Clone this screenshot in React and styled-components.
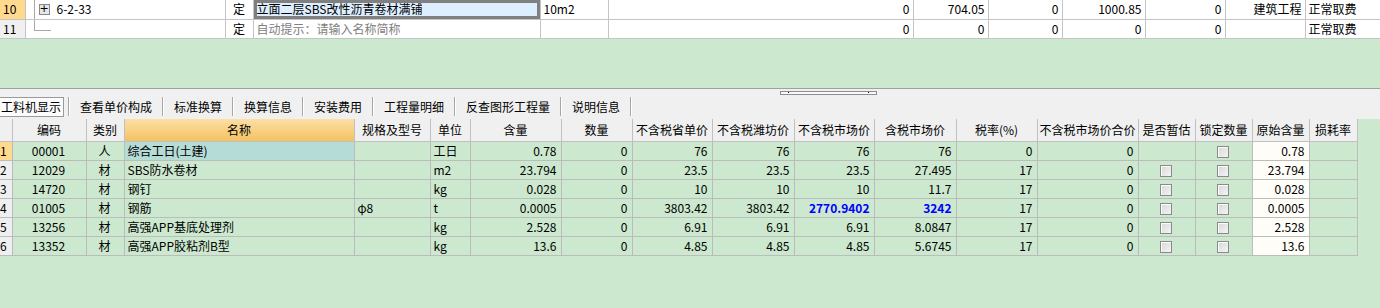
import React from 'react'
import styled, { createGlobalStyle } from 'styled-components'

const GlobalStyle = createGlobalStyle`
  body {
    margin: 0;
    background: #cce8cf;
    font-family: "Noto Sans CJK SC", "Liberation Sans", sans-serif;
    font-size: 12px;
    color: #000;
  }
`

const topCols = [25, 200, 28, 287, 68, 305, 75, 74, 83, 80, 80, 75]

const mainCols = [12, 74, 38, 230, 76, 40, 91, 71, 80, 82, 80, 82, 81, 101, 57, 57, 57, 48]

const headers = [
  '', '编码', '类别', '名称', '规格及型号', '单位', '含量', '数量', '不含税省单价', '不含税潍坊价',
  '不含税市场价', '含税市场价', '税率(%)', '不含税市场价合价', '是否暂估', '锁定数量', '原始含量', '损耗率'
]

const rows = [
  { code: '00001', kind: '人', name: '综合工日(土建)', spec: '', unit: '工日', qty: '0.78', p1: '76', p2: '76', p3: '76', p4: '76', tax: '0', est: false },
  { code: '12029', kind: '材', name: 'SBS防水卷材', spec: '', unit: 'm2', qty: '23.794', p1: '23.5', p2: '23.5', p3: '23.5', p4: '27.495', tax: '17', est: true },
  { code: '14720', kind: '材', name: '钢钉', spec: '', unit: 'kg', qty: '0.028', p1: '10', p2: '10', p3: '10', p4: '11.7', tax: '17', est: true },
  { code: '01005', kind: '材', name: '钢筋', spec: 'φ8', unit: 't', qty: '0.0005', p1: '3803.42', p2: '3803.42', p3: '2770.9402', p4: '3242', tax: '17', est: true, hot: true },
  { code: '13256', kind: '材', name: '高强APP基底处理剂', spec: '', unit: 'kg', qty: '2.528', p1: '6.91', p2: '6.91', p3: '6.91', p4: '8.0847', tax: '17', est: true },
  { code: '13352', kind: '材', name: '高强APP胶粘剂B型', spec: '', unit: 'kg', qty: '13.6', p1: '4.85', p2: '4.85', p3: '4.85', p4: '5.6745', tax: '17', est: true },
]

const tabs = ['工料机显示', '查看单价构成', '标准换算', '换算信息', '安装费用', '工程量明细', '反查图形工程量', '说明信息']

const App = () => {
  return (
    <>
      <GlobalStyle />
      <Page>
        <TopTable>
          <colgroup>
            {topCols.map((w, i) => <col key={i} style={{ width: w }} />)}
          </colgroup>
          <tbody>
            <TopRow>
              <TopCell $bg="#ffd98e">10</TopCell>
              <TopCell $tree>
                <TreeDown />
                <PlusBox>+</PlusBox>
                <TreeLabel>6-2-33</TreeLabel>
              </TopCell>
              <TopCell $align="center">定</TopCell>
              <TopCell $selected>立面二层SBS改性沥青卷材满铺</TopCell>
              <TopCell>10m2</TopCell>
              <TopCell $align="right">0</TopCell>
              <TopCell $align="right">704.05</TopCell>
              <TopCell $align="right">0</TopCell>
              <TopCell $align="right">1000.85</TopCell>
              <TopCell $align="right">0</TopCell>
              <TopCell $align="right">建筑工程</TopCell>
              <TopCell>正常取费</TopCell>
            </TopRow>
            <TopRow>
              <TopCell $bg="#f0f0f0">11</TopCell>
              <TopCell $tree>
                <TreeElbow />
              </TopCell>
              <TopCell $align="center">定</TopCell>
              <TopCell $color="#808080">自动提示：请输入名称简称</TopCell>
              <TopCell></TopCell>
              <TopCell $align="right">0</TopCell>
              <TopCell $align="right">0</TopCell>
              <TopCell $align="right">0</TopCell>
              <TopCell $align="right">0</TopCell>
              <TopCell $align="right">0</TopCell>
              <TopCell></TopCell>
              <TopCell>正常取费</TopCell>
            </TopRow>
          </tbody>
        </TopTable>

        <Spacer />

        <TabBar>
          <Grip><GripDot /><GripDot /></Grip>
          <TabStrip>
            {tabs.map((t, i) => (
              <React.Fragment key={t}>
                <Tab $active={i === 0}>{t}</Tab>
                <TabSep />
              </React.Fragment>
            ))}
          </TabStrip>
        </TabBar>

        <Grid>
          <colgroup>
            {mainCols.map((w, i) => <col key={i} style={{ width: w }} />)}
          </colgroup>
          <thead>
            <tr>
              {headers.map((h, i) => (
                <HeadCell key={i} $sorted={i === 3}>{h}</HeadCell>
              ))}
            </tr>
          </thead>
          <tbody>
            {rows.map((r, i) => (
              <tr key={r.code}>
                <NumCell $current={i === 0}>{i + 1}</NumCell>
                <Cell $align="center">{r.code}</Cell>
                <Cell $align="center">{r.kind}</Cell>
                <Cell $bg={i === 0 ? '#b5dcd6' : undefined}>{r.name}</Cell>
                <Cell>{r.spec}</Cell>
                <Cell>{r.unit}</Cell>
                <Cell $align="right">{r.qty}</Cell>
                <Cell $align="right">0</Cell>
                <Cell $align="right">{r.p1}</Cell>
                <Cell $align="right">{r.p2}</Cell>
                <Cell $align="right" $hot={r.hot}>{r.p3}</Cell>
                <Cell $align="right" $hot={r.hot}>{r.p4}</Cell>
                <Cell $align="right">{r.tax}</Cell>
                <Cell $align="right">0</Cell>
                <Cell $align="center">{r.est && <Check />}</Cell>
                <Cell $align="center"><Check /></Cell>
                <Cell $align="right" $bg="#fffdf8">{r.qty}</Cell>
                <Cell></Cell>
              </tr>
            ))}
          </tbody>
        </Grid>
      </Page>
    </>
  )
}

export default App

const Page = styled.div`
  width: 1380px;
  height: 308px;
  overflow: hidden;
`

const TopTable = styled.table`
  width: 1380px;
  table-layout: fixed;
  border-collapse: collapse;
  background: #fff;
  border-bottom: 1px solid #c0c0c0;
`

const TopRow = styled.tr`
  height: 19px;
`

const TopCell = styled.td`
  position: relative;
  padding: 0 3px;
  height: 18px;
  line-height: 18px;
  border: 1px solid #c4c4c4;
  border-top: none;
  white-space: nowrap;
  overflow: hidden;
  text-align: ${p => p.$align || 'left'};
  background: ${p => p.$selected ? '#ddeefe' : p.$bg || '#fff'};
  color: ${p => p.$color || '#000'};
  box-shadow: ${p => p.$selected ? 'inset 0 0 0 3px #808080' : 'none'};
  &:first-child {
    border-left: none;
  }
`

const TreeDown = styled.span`
  position: absolute;
  left: 8px;
  top: 0;
  bottom: 0;
  border-left: 1px solid #a8a8a8;
`

const TreeElbow = styled.span`
  position: absolute;
  left: 8px;
  top: 0;
  width: 16px;
  height: 10px;
  border-left: 1px solid #a8a8a8;
  border-bottom: 1px solid #a8a8a8;
`

const PlusBox = styled.span`
  position: absolute;
  left: 13px;
  top: 4px;
  width: 9px;
  height: 9px;
  border: 1px solid #888;
  background: #e6e6e6;
  font-size: 11px;
  line-height: 8px;
  text-align: center;
  font-family: "DejaVu Sans", sans-serif;
`

const TreeLabel = styled.span`
  padding-left: 28px;
`

const Spacer = styled.div`
  height: 49px;
`

const TabBar = styled.div`
  position: relative;
  height: 31px;
  border-top: 1px solid #a0a0a0;
  background: #f0f0f0;
  display: flex;
  align-items: flex-end;
  padding-bottom: 2px;
  box-sizing: border-box;
`

const Grip = styled.div`
  position: absolute;
  left: 780px;
  top: 2px;
  width: 97px;
  height: 4px;
  border: 1px solid #8c8c8c;
  background: #fafafa;
  display: flex;
  justify-content: space-between;
  align-items: center;
  padding: 0 7px;
  box-sizing: border-box;
`

const GripDot = styled.span`
  width: 1px;
  height: 1px;
  background: #000080;
`

const TabStrip = styled.div`
  display: flex;
  align-items: center;
  margin-left: -10px;
`

const Tab = styled.div`
  height: 18px;
  line-height: 18px;
  padding: ${p => p.$active ? '0 2px 0 10px' : '0 10px'};
  margin-right: ${p => p.$active ? '4px' : '0'};
  border: ${p => p.$active ? '1px solid #9a9a9a' : 'none'};
  background: ${p => p.$active ? '#fcfcfc' : 'transparent'};
  white-space: nowrap;
`

const TabSep = styled.div`
  width: 1px;
  height: 19px;
  background: #a6a6a6;
  border-right: 1px solid #fff;
`

const Grid = styled.table`
  width: 1357px;
  table-layout: fixed;
  border-collapse: collapse;
`

const HeadCell = styled.th`
  height: 22px;
  padding: 0;
  font-weight: normal;
  text-align: center;
  white-space: nowrap;
  overflow: hidden;
  border-right: 1px solid #c0c0c0;
  border-bottom: 1px solid #c0c0c0;
  background: ${p => p.$sorted ? 'linear-gradient(#fbdfa5, #f4c262)' : '#f0f0f0'};
`

const Cell = styled.td`
  height: 18px;
  padding: 0 4px 0 3px;
  line-height: 18px;
  white-space: nowrap;
  overflow: hidden;
  border: 1px solid #bcbcbc;
  border-top: none;
  text-align: ${p => p.$align || 'left'};
  background: ${p => p.$bg || '#cce8cf'};
  color: ${p => p.$hot ? '#0000ff' : '#000'};
  font-weight: ${p => p.$hot ? 'bold' : 'normal'};
`

const NumCell = styled.td`
  height: 18px;
  padding: 0;
  line-height: 18px;
  overflow: hidden;
  white-space: nowrap;
  border-bottom: 1px solid #bcbcbc;
  border-right: 1px solid #bcbcbc;
  background: ${p => p.$current ? '#ffd98e' : '#efefef'};
`

const Check = styled.span`
  display: inline-block;
  vertical-align: middle;
  width: 10px;
  height: 10px;
  border: 1px solid #8a8a8a;
  background: linear-gradient(135deg, #d8d8d8, #f4f4f4);
  box-shadow: inset 1px 1px 0 #fff;
`
